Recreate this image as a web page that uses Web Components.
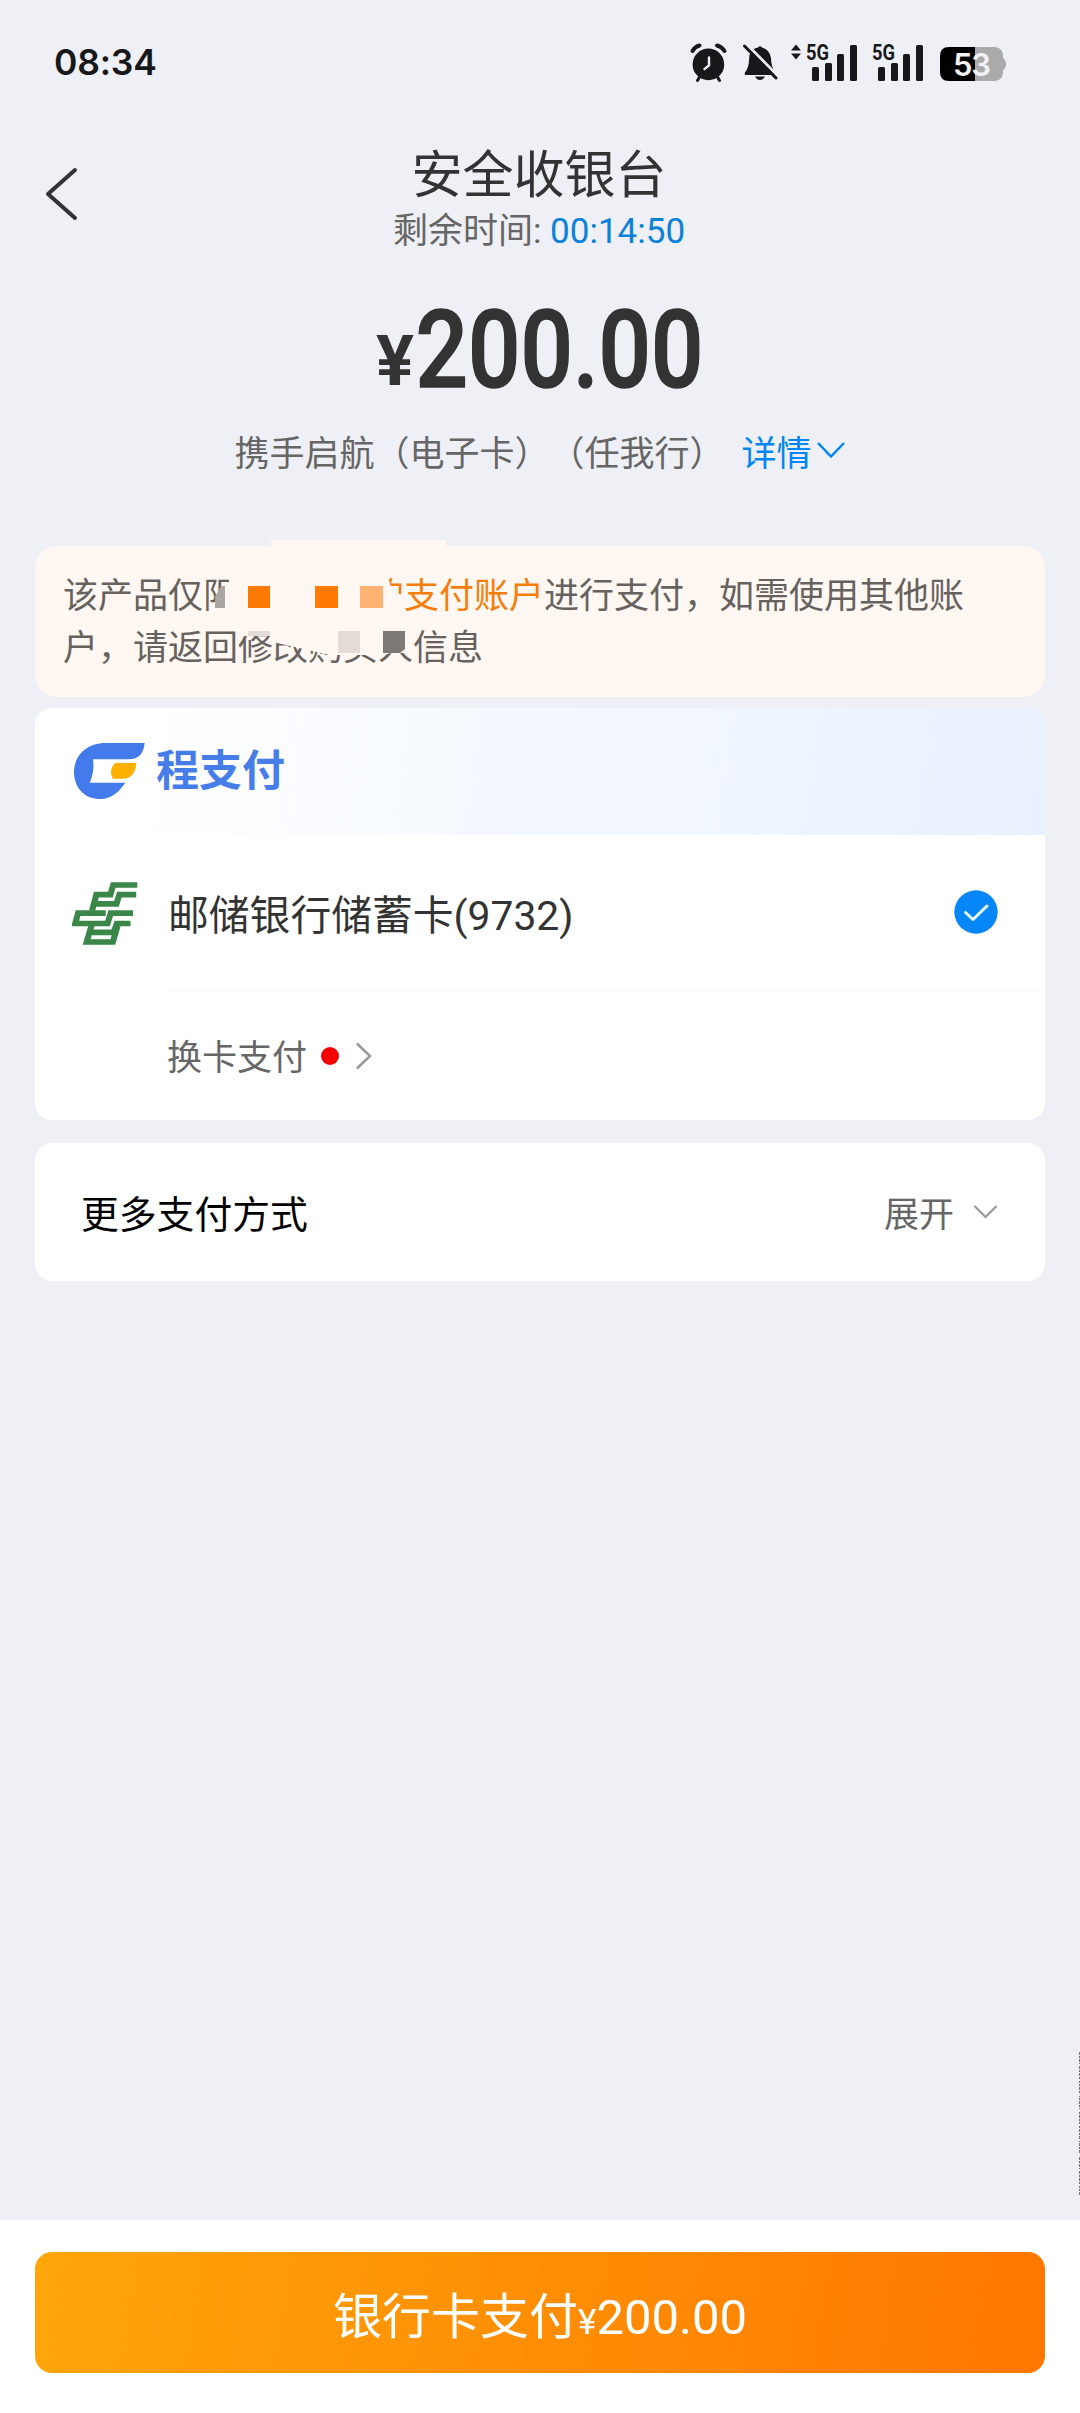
<!DOCTYPE html>
<html lang="zh-CN">
<head>
<meta charset="utf-8">
<title>安全收银台</title>
<style>
body {
	margin: 0;
	font-family: Roboto, "Noto Sans CJK SC", sans-serif;
	text-spacing-trim: space-all;
	color: #333;
}
</style>
</head>
<body>
<cashier-page>
	<status-bar slot="top" time="08:34" battery="53"></status-bar>
	<cashier-header slot="top" heading="安全收银台" countdown="00:14:50"></cashier-header>
	<order-summary slot="top" amount="200.00">携手启航（电子卡）（任我行）</order-summary>
	<account-notice></account-notice>
	<pay-card class="wallet">
		<wallet-brand></wallet-brand>
		<bank-option>邮储银行储蓄卡(9732)</bank-option>
		<switch-card>换卡支付</switch-card>
	</pay-card>
	<pay-card class="more">
		<more-methods action="展开">更多支付方式</more-methods>
	</pay-card>
	<edge-mark slot="edge"></edge-mark>
	<pay-footer slot="bottom" amount="200.00">银行卡支付</pay-footer>
</cashier-page>

<script>
const define = (name, html) => {
	const template = document.createElement("template");
	template.innerHTML = html;
	customElements.define(name, class extends HTMLElement {
		constructor() {
			super().attachShadow({ mode: "open" }).appendChild(template.content.cloneNode(true));
		}

		connectedCallback() {
			// copy host attributes into the marked text nodes
			this.shadowRoot.querySelectorAll("[data-attr]").forEach((node) => {
				node.textContent = this.getAttribute(node.dataset.attr);
			});
		}
	});
};

define("cashier-page", `
<style>
:host {
	display: flex;
	flex-direction: column;
	height: 2413px;
	position: relative;
	overflow: hidden;
	background: #eff0f5;
}
main {
	flex: 1;
	padding: 0 35px;
	display: flex;
	flex-direction: column;
}
</style>
<slot name="top"></slot>
<main><slot></slot></main>
<slot name="edge"></slot>
<slot name="bottom"></slot>
`);

define("status-bar", `
<style>
:host {
	display: flex;
	justify-content: space-between;
	height: 124px;
	box-sizing: border-box;
	padding: 42px 74px 0 54px;
	color: #17181a;
}
time {
	font: 600 35.500px/41px Inter, sans-serif;
	letter-spacing: -0.200px;
}
.icons {
	display: flex;
	height: 42px;
}
svg {
	display: block;
	overflow: visible;
	fill: currentColor;
}
text {
	font-family: Roboto, sans-serif;
	font-weight: 700;
}
.second {
	margin: 0 -66px 0 14px;
}
.battery {
	display: grid;
	width: 66px;
	height: 34px;
	margin: 5px 0 0 82px;
}
.battery > * {
	grid-area: 1 / 1;
}
.battery span {
	font: 600 31px/35px Inter, sans-serif;
	color: #f2f2f2;
	width: 63px;
	text-align: center;
	letter-spacing: -1px;
}
</style>
<time data-attr="time"></time>
<div class="icons">
	<svg width="168" height="42" viewBox="690 42 168 42" aria-hidden="true">
		<circle cx="708.4" cy="64.4" r="15.8" />
		<path d="M692.500 51Q695 46.500 699.500 45.500M717 45.500Q721.500 46.500 724.500 51" stroke="currentColor" stroke-width="4" stroke-linecap="round" fill="none" />
		<path d="M699.500 77 697.500 80.500M717.500 77 719.500 80.500" stroke="currentColor" stroke-width="3" stroke-linecap="round" />
		<path d="M709 57.500V65.500L704.500 69" stroke="#eff0f5" stroke-width="2.400" fill="none" stroke-linecap="round" />
		<path d="M749.500 55Q752 48.500 758 47.500Q760 45 762 47.500Q770 50 771 58Q771 67 775.500 72.500Q776 75 773 75H746Q744 75 745 72.500Q749 67 749 60Z" />
		<path d="M755 76.500H765Q763 80 760 80Q757 80 755 76.500Z" />
		<path d="M746.200 43.800 778.200 76.300" stroke="#eff0f5" stroke-width="3" />
		<path d="M744.500 46 776 78" stroke="currentColor" stroke-width="3" stroke-linecap="round" />
		<path d="M791 50.500 796 44.500 801 50.500ZM791 53.500 796 59.500 801 53.500Z" />
		<text x="806" y="60" font-size="21.500" textLength="23" lengthAdjust="spacingAndGlyphs">5G</text>
		<rect x="812" y="67" width="7" height="14" rx="1.500" />
		<rect x="825" y="63" width="7" height="18" rx="1.500" />
		<rect x="837" y="54" width="7" height="27" rx="1.500" />
		<rect x="850" y="45" width="7" height="36" rx="1.500" />
	</svg>
	<svg class="second" width="52" height="42" viewBox="806 42 52 42" aria-hidden="true">
		<text x="806" y="60" font-size="21.500" textLength="23" lengthAdjust="spacingAndGlyphs">5G</text>
		<rect x="812" y="67" width="7" height="14" rx="1.500" />
		<rect x="825" y="63" width="7" height="18" rx="1.500" />
		<rect x="837" y="54" width="7" height="27" rx="1.500" />
		<rect x="850" y="45" width="7" height="36" rx="1.500" />
	</svg>
	<div class="battery">
		<svg width="66" height="34" viewBox="0 0 66 34" aria-hidden="true">
			<path d="M35 0H54Q62 0 63 8V11Q66 13 66 17T63 23V26Q62 34 54 34H35Z" fill="#aaaaac" />
			<path d="M35 0V34H9Q0 34 0 25V9Q0 0 9 0Z" fill="#000" />
		</svg>
		<span data-attr="battery"></span>
	</div>
</div>
`);

define("cashier-header", `
<style>
:host {
	display: grid;
	grid-template-columns: 120px 1fr 120px;
	height: 168px;
}
.back {
	margin: 43px 0 0 43px;
}
.titles {
	text-align: center;
	padding: 22px 2px 0 0;
}
h1 {
	margin: 0;
	font-size: 51px;
	font-weight: 400;
	line-height: 60px;
	color: #333;
}
p {
	margin: -1px 0 0;
	font-size: 35px;
	line-height: 54px;
	font-weight: 400;
	color: #666;
}
b {
	font-weight: 400;
	color: #0b82d8;
}
</style>
<svg class="back" width="36" height="54" viewBox="0 0 36 54" fill="none" stroke="#333" stroke-width="4" stroke-linecap="round" stroke-linejoin="round" aria-hidden="true">
	<path d="M32 3 5 27 32 51" />
</svg>
<div class="titles">
	<h1 data-attr="heading"></h1>
	<p>剩余时间: <b data-attr="countdown"></b></p>
</div>
`);

define("order-summary", `
<style>
:host {
	display: block;
	height: 254px;
	text-align: center;
}
.amount {
	display: flex;
	justify-content: center;
	height: 124px;
}
.sum {
	display: block;
	overflow: visible;
}
.sum text {
	font-family: Roboto, sans-serif;
	fill: #333;
	stroke: #333;
}
.goods {
	display: flex;
	align-items: center;
	justify-content: center;
	height: 68px;
	font-size: 35px;
	color: #666;
}
.detail {
	display: flex;
	align-items: center;
	margin-left: 17px;
	color: #0086f6;
}
.detail svg {
	margin: 0 0 1px 4px;
}
</style>
<div class="amount">
	<svg class="sum" width="340" height="124" viewBox="370 292 340 124">
		<text x="376" y="385" font-size="70" font-weight="700" stroke-width="0" textLength="38" lengthAdjust="spacingAndGlyphs">¥</text>
		<text x="415.500" y="387" font-size="107" font-weight="500" stroke-width="1.500" textLength="288" lengthAdjust="spacingAndGlyphs" data-attr="amount"></text>
	</svg>
</div>
<div class="goods">
	<slot></slot>
	<span class="detail">详情<svg width="30" height="18" viewBox="0 0 30 18" fill="none" stroke="currentColor" stroke-width="2.500" aria-hidden="true"><path d="M2 2 15 15.500 28 2" /></svg></span>
</div>
`);

define("account-notice", `
<style>
:host {
	display: block;
	position: relative;
	height: 151px;
	box-sizing: border-box;
	padding: 25px 28px;
	border-radius: 22px;
	background: #fff7f1;
	font-size: 35px;
	line-height: 52px;
	color: #666260;
	white-space: nowrap;
}
em {
	font-style: normal;
	color: #f57d0c;
}
.gap {
	display: inline-block;
	width: 131px;
}
svg {
	position: absolute;
	left: 0;
	top: -6px;
}
</style>
该产品仅限<span class="gap"></span><em>的支付账户</em>进行支付，如需使用其他账<br>户，请返回修改购买人信息
<svg width="420" height="156" viewBox="35 540 420 156" aria-hidden="true">
	<path d="M271 540H446V550H271Z" fill="#fff7f1" />
	<path d="M229 574H387L391 587 392 592 403 595V653H391L383 655H330L277 643 270 636H240L215 612V597L229 582Z" fill="#fff7f1" />
	<path d="M225 586V608H215V597L221 586Z" fill="#aaa6a4" />
	<path d="M248 586h22v22h-22zM315 586h23v22h-23z" fill="#ff7a05" />
	<path d="M360 586h23v22h-23z" fill="#ffb272" />
	<path d="M248 631h22v5h-22zM338 631h22v22h-22z" fill="#e3dbd6" />
	<path d="M383 631h22v18l-5 4h-17z" fill="#7e7976" />
</svg>
`);

define("pay-card", `
<style>
:host {
	display: block;
	overflow: hidden;
	border-radius: 17px;
	background: #fff;
}
:host(.wallet) {
	height: 412px;
	margin-top: 11px;
}
:host(.more) {
	height: 138px;
	margin-top: 23px;
}
</style>
<slot></slot>
`);

define("wallet-brand", `
<style>
:host {
	display: flex;
	align-items: center;
	height: 127px;
	box-sizing: border-box;
	padding: 0 0 1px 39px;
	background: linear-gradient(98deg, #fff 10%, #f5f9ff 45%, #eff5ff 75%, #e8f0ff);
	color: #477de9;
	font: 700 43px/60px "Noto Sans CJK SC", sans-serif;
}
svg {
	margin-right: 11px;
}
span {
	margin-top: -9px;
}
</style>
<svg width="71" height="56" viewBox="122 130 198 168" preserveAspectRatio="none" aria-hidden="true">
	<path fill="#447bec" d="M210 130H319Q315 179 275 179H175Q180 215 166 249H265C240 290 215 298 192 298C150 298 122 262 122 218C122 170 155 130 210 130Z" />
	<path fill="#ffb103" d="M236 190H296Q292 237 258 237H230Q218 212 236 190Z" />
</svg>
<span>程支付</span>
`);

define("bank-option", `
<style>
:host {
	display: flex;
	align-items: center;
	height: 156px;
	padding: 0 47px 0 37px;
	font-size: 40.800px;
	color: #333;
}
.bank {
	margin-right: 30px;
}
.label {
	flex: 1;
	margin-top: -2px;
}
.check {
	margin-bottom: 2px;
}
</style>
<svg class="bank" width="66" height="63" viewBox="118 548 184 190" preserveAspectRatio="none" fill="none" stroke="#3a8749" stroke-width="17" aria-hidden="true">
	<path d="M300 557H233L225 586H186L174 634" />
	<path d="M297 586H250L242 614H182" />
	<path d="M288 642H226L217 673H127L135 642H212" />
	<path d="M281 673H243L234 700H166" />
	<path d="M174 673 159 729H232L245 680" />
</svg>
<span class="label"><slot></slot></span>
<svg class="check" width="44" height="44" viewBox="0 0 44 44" aria-hidden="true">
	<circle cx="22" cy="22" r="21.700" fill="#0786f8" />
	<path d="M11.500 22.500 19 29.500 33 16" fill="none" stroke="#e8fbff" stroke-width="3" stroke-linecap="round" stroke-linejoin="round" />
</svg>
`);

define("switch-card", `
<style>
:host {
	display: flex;
	align-items: center;
	height: 125px;
	margin-left: 132px;
	border-top: 1px solid #f9f9f9;
	font-size: 35px;
	color: #666;
}
i {
	width: 18px;
	height: 18px;
	margin: 3px 16px 0 14px;
	border-radius: 50%;
	background: #f70000;
}
svg {
	margin-top: 3px;
}
</style>
<slot></slot><i></i>
<svg width="18" height="28" viewBox="0 0 18 28" fill="none" stroke="#999" stroke-width="2.500" aria-hidden="true"><path d="M2 1.500 15 14 2 26.500" /></svg>
`);

define("more-methods", `
<style>
:host {
	display: flex;
	align-items: center;
	height: 138px;
	padding: 0 47px 0 46px;
	font-size: 37.800px;
	color: #000;
}
.name {
	flex: 1;
	margin-top: -2px;
}
.action {
	margin-top: -2px;
	font-size: 35px;
	color: #666;
}
svg {
	margin-left: 19px;
}
</style>
<span class="name"><slot></slot></span>
<span class="action" data-attr="action"></span>
<svg width="25" height="14" viewBox="0 0 25 14" fill="none" stroke="#999" stroke-width="2.200" aria-hidden="true"><path d="M1.500 1 12.500 12 23.500 1" /></svg>
`);

define("edge-mark", `
<style>
:host {
	display: block;
	position: absolute;
	right: 0;
	top: 2049px;
	width: 1px;
	height: 147px;
	background:
		repeating-linear-gradient(#eff0f5 0 2px, transparent 2px 15px),
		repeating-linear-gradient(#707072 0 2px, #e6e7eb 2px 3px, #77787a 3px 6px, #eff0f5 6px 7px);
}
</style>
`);

define("pay-footer", `
<style>
:host {
	display: block;
	height: 193px;
	box-sizing: border-box;
	padding: 32px 35px 40px;
	background: #fff;
}
button {
	display: block;
	width: 100%;
	height: 121px;
	border: 0;
	padding: 0;
	border-radius: 17px;
	background: linear-gradient(100deg, #ffa50a, #ff7700);
	font: inherit;
	font-size: 49px;
	color: #fff;
}
small {
	font-size: 35px;
}
</style>
<button><slot></slot><small>¥</small><span data-attr="amount"></span></button>
`);
</script>
</body>
</html>
